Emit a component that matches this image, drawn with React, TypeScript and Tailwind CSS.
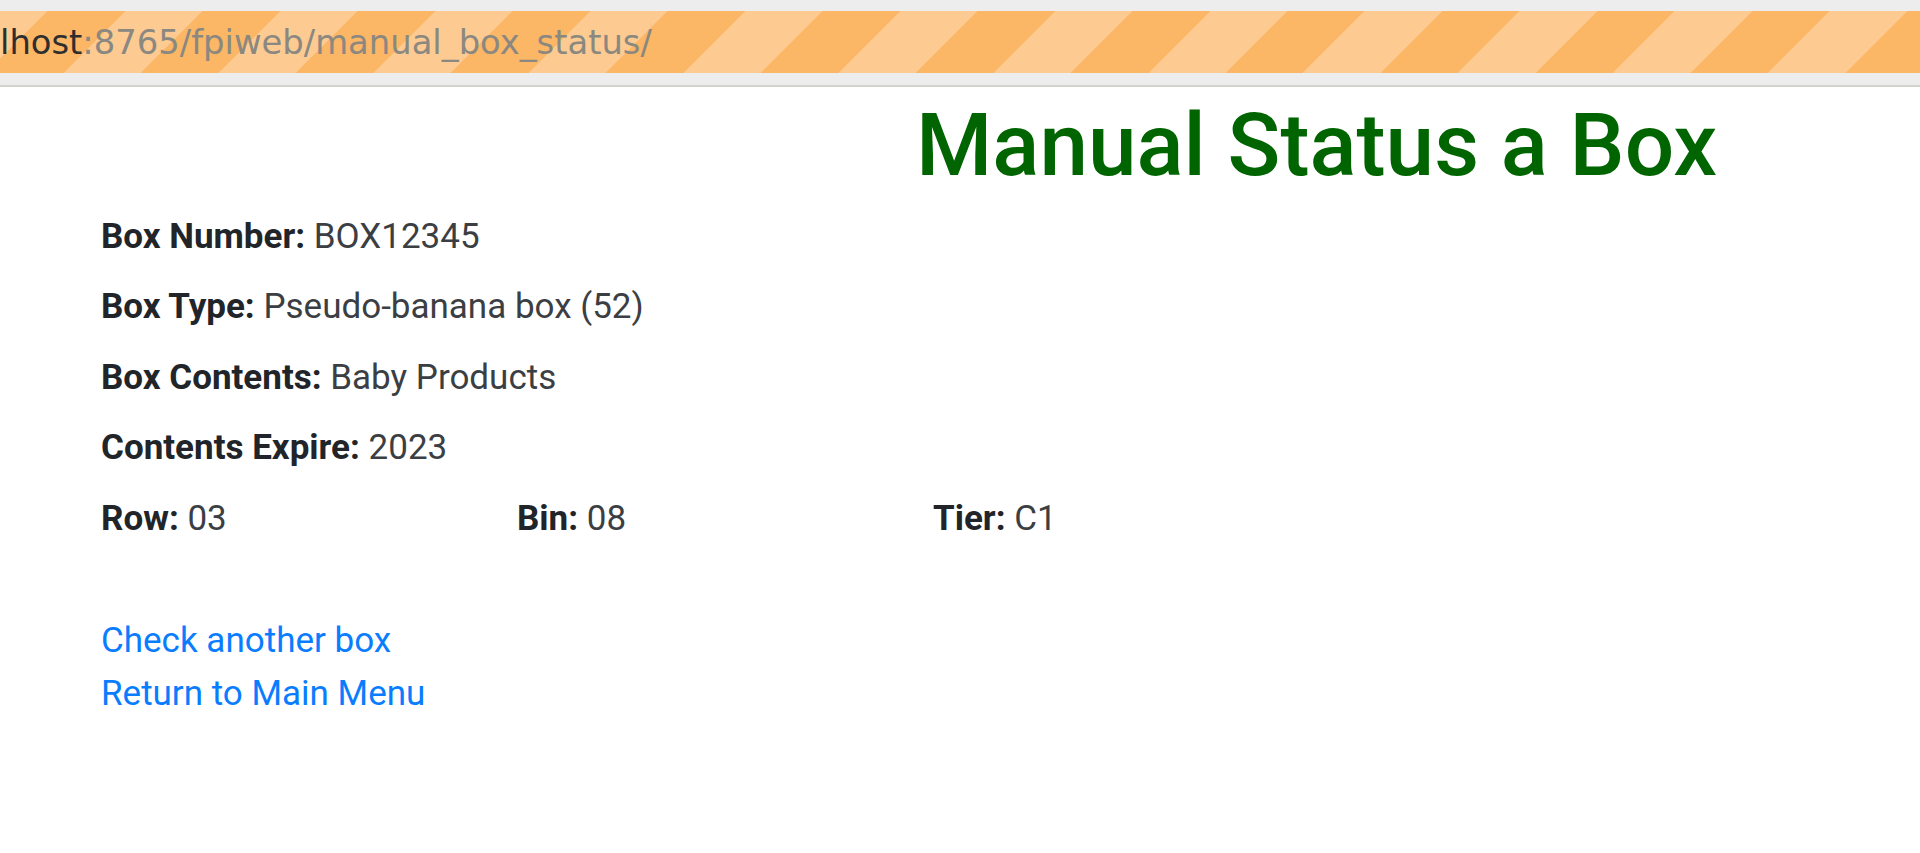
const details = [
  { label: 'Box Number:', value: 'BOX12345' },
  { label: 'Box Type:', value: 'Pseudo-banana box (52)' },
  { label: 'Box Contents:', value: 'Baby Products' },
  { label: 'Contents Expire:', value: '2023' },
]

const location = [
  { label: 'Row:', value: '03' },
  { label: 'Bin:', value: '08' },
  { label: 'Tier:', value: 'C1' },
]

function UrlBar() {
  return (
    <div className="bg-[#ededed] pt-[11px] pb-[12px] border-b-2 border-[#d4d2cf]">
      <div className="h-[62px] flex items-center overflow-hidden bg-[repeating-linear-gradient(135deg,#fdcb92_0px,#fdcb92_33.9px,#fbb666_33.9px,#fbb666_88.4px,#fdcb92_88.4px,#fdcb92_109.6px)]">
        <span className="whitespace-nowrap text-[33.8px] leading-none font-['DejaVu_Sans',sans-serif] text-[#8a8880] pt-[2px]">
          <span className="text-[#2e2e2e]">lhost</span>:8765/fpiweb/manual_box_status/
        </span>
      </div>
    </div>
  )
}

function Field({ label, value }: { label: string; value: string }) {
  return (
    <div className="leading-[70.5px] whitespace-nowrap">
      <span className="font-bold">{label}</span> <span className="text-[#3b3f44]">{value}</span>
    </div>
  )
}

export default function App() {
  return (
    <div className="min-h-[853px] w-[1920px] overflow-hidden bg-white font-['Roboto',sans-serif] text-[#212529]">
      <UrlBar />

      <h1 className="pt-[6px] pl-[916px] text-[87.3px] leading-[1.2] font-medium text-[#006400]">
        Manual Status a Box
      </h1>

      <div className="pl-[101px] pt-[4px] text-[35px]">
        {details.map((d) => (
          <Field key={d.label} label={d.label} value={d.value} />
        ))}
        <div className="grid grid-cols-[416px_416px_416px]">
          {location.map((d) => (
            <Field key={d.label} label={d.label} value={d.value} />
          ))}
        </div>

        <div className="mt-[60px] flex flex-col items-start leading-[53px]">
          <a href="#" className="text-[#0a7dff]">Check another box</a>
          <a href="#" className="text-[#0a7dff]">Return to Main Menu</a>
        </div>
      </div>
    </div>
  )
}
